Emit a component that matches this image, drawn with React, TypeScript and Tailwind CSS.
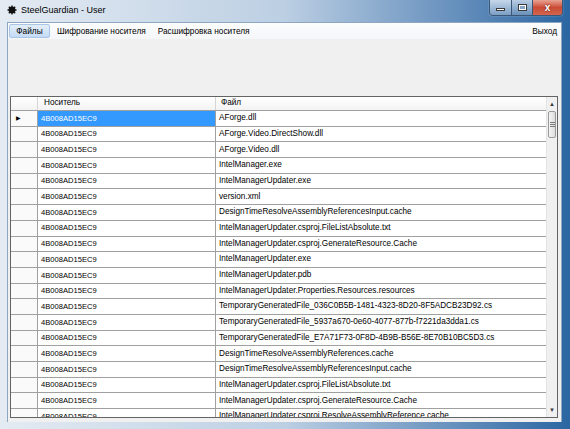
import React from 'react';

const files = [
  'AForge.dll',
  'AForge.Video.DirectShow.dll',
  'AForge.Video.dll',
  'IntelManager.exe',
  'IntelManagerUpdater.exe',
  'version.xml',
  'DesignTimeResolveAssemblyReferencesInput.cache',
  'IntelManagerUpdater.csproj.FileListAbsolute.txt',
  'IntelManagerUpdater.csproj.GenerateResource.Cache',
  'IntelManagerUpdater.exe',
  'IntelManagerUpdater.pdb',
  'IntelManagerUpdater.Properties.Resources.resources',
  'TemporaryGeneratedFile_036C0B5B-1481-4323-8D20-8F5ADCB23D92.cs',
  'TemporaryGeneratedFile_5937a670-0e60-4077-877b-f7221da3dda1.cs',
  'TemporaryGeneratedFile_E7A71F73-0F8D-4B9B-B56E-8E70B10BC5D3.cs',
  'DesignTimeResolveAssemblyReferences.cache',
  'DesignTimeResolveAssemblyReferencesInput.cache',
  'IntelManagerUpdater.csproj.FileListAbsolute.txt',
  'IntelManagerUpdater.csproj.GenerateResource.Cache',
  'IntelManagerUpdater.csproj.ResolveAssemblyReference.cache',
];

const AppIcon = () => (
  <svg width="10" height="10" viewBox="0 0 10 10">
    <circle cx="5" cy="5" r="3.4" fill="#111" />
    <path d="M5 0.5v2M5 7.5v2M0.5 5h2M7.5 5h2M1.8 1.8l1.4 1.4M6.8 6.8l1.4 1.4M1.8 8.2l1.4-1.4M6.8 3.2l1.4-1.4" stroke="#111" strokeWidth="1.3" />
  </svg>
);

const CaptionButtons = () => (
  <div className="flex h-[16px] rounded-b-[4px] border border-t-0 border-[#3b5778] overflow-hidden shadow-[0_0_1px_#fff]">
    <div className="w-[22px] flex items-center justify-center bg-gradient-to-b from-[#c6d7ea] to-[#7b9ec4] border-r border-[#3b5778]">
      <div className="w-[9px] h-[3px] mt-[4px] bg-white border border-[#3a3a3a]" />
    </div>
    <div className="w-[21px] flex items-center justify-center bg-gradient-to-b from-[#b9cde3] to-[#6a90ba] border-r border-[#3b5778]">
      <div className="w-[9px] h-[7px] border border-[#3a3a3a] bg-white p-[1px]">
        <div className="w-full h-full bg-[#8aa6c4]" />
      </div>
    </div>
    <div className="w-[29px] flex items-center justify-center bg-gradient-to-b from-[#e8a293] via-[#c94b35] to-[#d4654f]">
      <span className="text-white text-[10px] font-bold leading-none [text-shadow:0_0_2px_#5a1a10]">x</span>
    </div>
  </div>
);

const Row = ({ idx, file }: { idx: number; file: string }) => {
  const selected = idx === 0;
  return (
    <div className="flex h-[15.7px] shrink-0 border-b border-[#a0a0a0]">
      <div className="w-[27px] shrink-0 border-r border-[#a0a0a0] bg-[#fafafa] flex items-center pl-[5px]">
        {selected && <span className="text-[6px] leading-none text-black">▶</span>}
      </div>
      <div
        className={`w-[178px] shrink-0 border-r border-[#a0a0a0] flex items-center pl-[3px] text-[7.6px] ${
          selected ? 'bg-[#3399ff] text-white' : 'bg-white text-black'
        }`}
      >
        4B008AD15EC9
      </div>
      <div className="flex-1 bg-white flex items-center pl-[3px] whitespace-nowrap overflow-hidden">{file}</div>
    </div>
  );
};

export default function App() {
  return (
    <div className="w-[570px] h-[429px] overflow-hidden flex flex-col bg-gradient-to-r from-[#e4ebf3] via-[#bccfe3] to-[#2a66a2] font-['Liberation_Sans',Arial,sans-serif]">
      {/* Title bar */}
      <div className="h-[22px] shrink-0 flex items-start">
        <div className="flex items-center gap-[4px] pl-[7px] pt-[5px]">
          <AppIcon />
          <span className="text-[9px] text-black leading-none">SteelGuardian - User</span>
        </div>
        <div className="ml-auto mr-[7px]">
          <CaptionButtons />
        </div>
      </div>

      <div className="flex-1 flex min-h-0">
        <div className="w-[7px] shrink-0" />
        {/* Client area */}
        <div className="flex-1 flex flex-col bg-[#f0f0f0] border border-[#8ea7c1] border-b-0 min-w-0">
          {/* Menu strip */}
          <div className="h-[16px] shrink-0 flex items-center bg-gradient-to-b from-[#fdfdfd] to-[#f4f6f9] text-[8.3px] text-black px-[1px]">
            <div className="h-[14px] w-[41px] justify-center flex items-center rounded-[2px] border border-[#a8c5e8] bg-gradient-to-b from-[#e4eefa] to-[#c4dbf4]">
              Файлы
            </div>
            <div className="pl-[7px] pr-[6px]">Шифрование носителя</div>
            <div className="px-[6px]">Расшифровка носителя</div>
            <div className="ml-auto pr-[3px]">Выход</div>
          </div>

          {/* Tool area */}
          <div className="h-[57px] shrink-0" />

          {/* Data grid */}
          <div className="flex-1 ml-[2px] mr-[3px] mb-[4px] border border-[#646464] bg-[#ababab] flex min-h-0 overflow-hidden text-[8.2px] text-black">
            <div className="flex-1 flex flex-col min-w-0 overflow-hidden bg-white">
              <div className="h-[14px] shrink-0 flex border-b border-[#a0a0a0] bg-gradient-to-b from-white to-[#f3f3f3]">
                <div className="w-[27px] shrink-0 border-r border-[#d5d5d5]" />
                <div className="w-[178px] shrink-0 border-r border-[#d5d5d5] flex items-center pl-[6px]">Носитель</div>
                <div className="flex-1 flex items-center pl-[5px]">Файл</div>
              </div>
              {files.map((f, i) => (
                <Row key={i} idx={i} file={f} />
              ))}
            </div>
            {/* Scrollbar */}
            <div className="w-[11px] shrink-0 flex flex-col bg-[#f0f0f0] border-l border-[#e3e3e3]">
              <div className="h-[14px] shrink-0 flex items-center justify-center text-[6px] text-[#3b3b3b]">▲</div>
              <div className="h-[27px] mx-[1px] shrink-0 rounded-[2px] border border-[#9a9a9a] bg-gradient-to-r from-[#f5f5f5] to-[#dcdcdc] flex flex-col items-center justify-center gap-[1px]">
                <div className="w-[5px] h-px bg-[#7a7a7a]" />
                <div className="w-[5px] h-px bg-[#7a7a7a]" />
                <div className="w-[5px] h-px bg-[#7a7a7a]" />
              </div>
              <div className="flex-1" />
              <div className="h-[13px] shrink-0 flex items-center justify-center text-[6px] text-[#3b3b3b]">▼</div>
            </div>
          </div>
        </div>
        <div className="w-[8px] shrink-0" />
      </div>
      <div className="h-[7px] shrink-0" />
    </div>
  );
}
